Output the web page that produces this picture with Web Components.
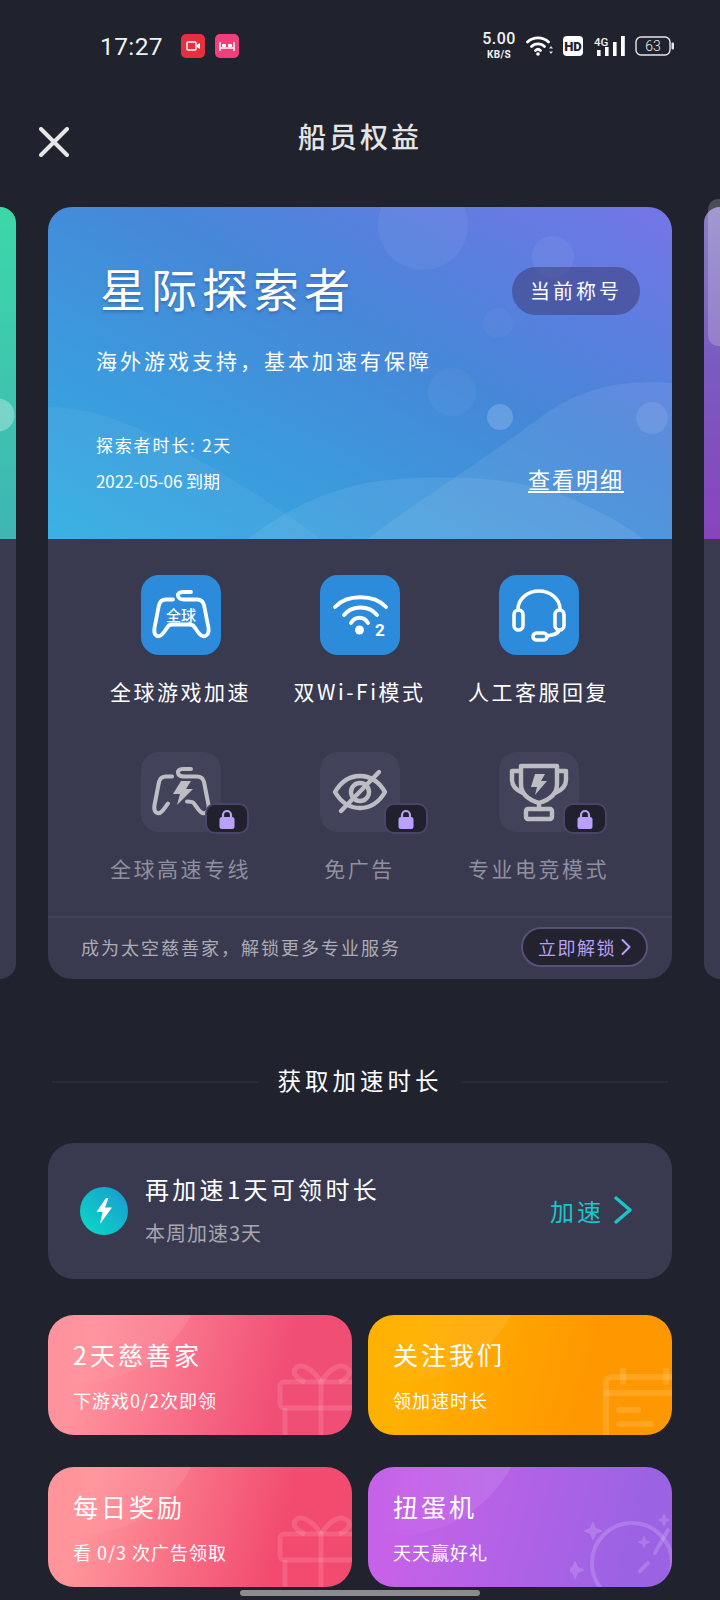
<!DOCTYPE html>
<html lang="zh">
<head>
<meta charset="utf-8">
<title>船员权益</title>
<style>
  html, body {
    margin: 0;
    background: #20222d;
  }
  body {
    font-family: "Noto Sans CJK SC", "Noto Sans", sans-serif;
    color: #fff;
  }
</style>
</head>
<body>

<template id="status-bar-tpl">
  <style>
    :host {
      display: flex;
      align-items: center;
      height: 92px;
      padding: 0 46px 0 100px;
      box-sizing: border-box;
      color: #f2f2f2;
      font-family: Roboto, sans-serif;
    }
    .time { font-size: 24.5px; width: 81px; letter-spacing: .4px; }
    .apps { display: flex; gap: 10px; }
    .right { margin-left: auto; display: flex; align-items: center; }
    .speed { width: 36px; text-align: center; margin-right: 9px; }
    .speed b { display: block; font-size: 16px; line-height: 16px; font-weight: 500; letter-spacing: .5px; }
    .speed i { display: block; font-size: 10px; line-height: 15px; font-weight: 700; font-style: normal; letter-spacing: .3px; }
    svg { display: block; }
    .bat { position: relative; width: 39px; height: 20px; margin-left: 10px; }
    .bat span { position: absolute; left: 0; right: 3px; top: 0; bottom: 0; text-align: center; font-size: 14px; line-height: 20px; font-weight: 300; }
  </style>
  <span class="time">17:27</span>
  <span class="apps">
    <svg width="24" height="24" viewBox="0 0 24 24"><rect width="24" height="24" rx="5" fill="#e5303f"/><rect x="6" y="8" width="9" height="8" rx="1" fill="none" stroke="#fff" stroke-width="1.4"/><path d="M15.5 11 L19 9 V15 L15.5 13" fill="#fff"/></svg>
    <svg width="24" height="24" viewBox="0 0 24 24"><rect width="24" height="24" rx="5" fill="#f23f7c"/><path d="M5 17 V8 M19 17 V8 M5 14 H19" stroke="#fff" stroke-width="1.5" fill="none"/><rect x="7" y="10" width="4" height="3" rx="1" fill="#fff"/><rect x="13" y="10" width="4" height="3" rx="1" fill="#fff"/></svg>
  </span>
  <span class="right">
    <span class="speed"><b>5.00</b><i>KB/S</i></span>
    <svg width="27" height="20" viewBox="0 0 27 20" fill="none" stroke="#fff" stroke-width="2.8" stroke-linecap="round"><path d="M1.5 6 C7 0.5 17 0.5 22.5 6"/><path d="M5.5 10.5 C9 7 15 7 18.5 10.5"/><path d="M9.5 14.5 C11 13 13 13 14.5 14.5"/><circle cx="12" cy="18" r="1.8" fill="#fff" stroke="none"/><path d="M25 10 l-2 2.6 h4 z M25 18 l-2 -2.6 h4 z" fill="#ddd" stroke="none"/></svg>
    <svg style="margin-left:10px" width="20" height="20" viewBox="0 0 20 20"><rect width="20" height="20" rx="4" fill="#fff"/><text x="10" y="15" text-anchor="middle" font-family="Roboto, sans-serif" font-size="13" font-weight="900" fill="#20222d">HD</text></svg>
    <svg style="margin-left:11px" width="31" height="20" viewBox="0 0 31 20"><text x="0" y="10" font-family="Roboto, sans-serif" font-size="11.5" font-weight="500" fill="#f2f2f2">4G</text><rect x="3" y="14" width="3.6" height="6" fill="#fff"/><rect x="11" y="11" width="3.6" height="9" fill="#fff"/><rect x="19" y="6" width="3.6" height="14" fill="#fff"/><rect x="27" y="0" width="3.8" height="20" fill="#fff"/></svg>
    <span class="bat">
      <svg width="39" height="20" viewBox="0 0 39 20"><rect x="1" y="1" width="34" height="18" rx="5" fill="none" stroke="#e8e8e8" stroke-width="1.4"/><rect x="36.5" y="6.5" width="2.5" height="7" rx="1" fill="#e8e8e8"/></svg>
      <span>63</span>
    </span>
  </span>
</template>

<template id="top-bar-tpl">
  <style>
    :host {
      display: flex;
      align-items: center;
      justify-content: center;
      position: relative;
      height: 92px;
      box-sizing: border-box;
      padding-bottom: 4px;
    }
    .close { position: absolute; left: 39px; top: 35px; }
    h1 {
      margin: 0;
      font-size: 28px;
      font-weight: 500;
      letter-spacing: 3px;
      color: #e4e4e4;
    }
  </style>
  <svg class="close" width="30" height="30" viewBox="0 0 30 30" fill="none" stroke="#e6e6e6" stroke-width="4" stroke-linecap="round"><path d="M2 2 L28 28 M28 2 L2 28"/></svg>
  <h1><slot></slot></h1>
</template>

<template id="tier-carousel-tpl">
  <style>
    :host {
      display: flex;
      gap: 32px;
      margin-top: 23px;
      width: 720px;
      height: 772px;
    }
  </style>
  <slot></slot>
</template>

<template id="peek-card-tpl">
  <style>
    :host {
      display: flex;
      flex-direction: column;
      position: relative;
      width: 16px;
      background: #393a4f;
    }
    .head { height: 332px; flex: none; }
    .bump {
      position: absolute;
      display: none;
      left: 4px;
      top: -8px;
      width: 16px;
      height: 147px;
      border-radius: 10px 0 0 10px;
      background: rgba(255, 255, 255, .2);
    }
    :host([side="left"]) { border-radius: 0 16px 16px 0; overflow: hidden; }
    :host([side="left"]) .head {
      background:
        radial-gradient(circle at -2px 208px, rgba(255,255,255,.3) 0 16px, transparent 17px),
        linear-gradient(180deg, #3cd8a8, #3fb5b4);
    }
    :host([side="right"]) { border-radius: 16px 0 0 16px; }
    :host([side="right"]) .head {
      border-radius: 16px 0 0 0;
      background: linear-gradient(180deg, #8a80c4 0, #7a5cc0 45%, #8844bc 100%);
    }
    :host([side="right"]) .bump { display: block; }
  </style>
  <div class="head"></div>
  <div class="bump"></div>
</template>

<template id="tier-card-tpl">
  <style>
    :host {
      display: block;
      width: 624px;
      flex: none;
      border-radius: 24px;
      overflow: hidden;
      background: #393a4f;
    }
    .head {
      position: relative;
      height: 332px;
      box-sizing: border-box;
      padding: 49px 32px 0 48px;
      background: linear-gradient(to top right, #31aee2 0%, #4687d8 58%, #7575e8 100%);
    }
    .deco { position: absolute; left: 0; top: 0; }
    .row { position: relative; display: flex; justify-content: space-between; align-items: flex-start; }
    h2 {
      margin: 0 0 0 4px;
      font-size: 46px;
      line-height: 62px;
      font-weight: 400;
      letter-spacing: 5px;
      text-shadow: 0 2px 3px rgba(30, 50, 110, .35);
    }
    .now {
      margin-top: 11px;
      width: 128px;
      height: 48px;
      border-radius: 24px;
      background: rgba(60, 60, 120, .55);
      text-align: center;
      font-size: 20px;
      line-height: 47px;
      letter-spacing: 3px;
    }
    .desc {
      position: relative;
      margin-top: 27px;
      font-size: 21px;
      line-height: 30px;
      letter-spacing: 3px;
    }
    .meta { position: relative; display: flex; justify-content: space-between; align-items: flex-end; margin-top: 52px; padding-right: 16px; }
    ::slotted(div) { font-size: 17px; line-height: 36px; }
    a {
      font-size: 22px;
      line-height: 26px;
      letter-spacing: 2px;
      margin-bottom: 6px;
      border-bottom: 2px solid #fff;
      color: #fff;
    }
    .perks {
      display: grid;
      grid-template-columns: repeat(3, 179px);
      row-gap: 50px;
      padding: 36px 0 37px 43px;
    }
    .foot {
      display: flex;
      align-items: center;
      justify-content: space-between;
      height: 63px;
      padding: 0 24px 4px 33px;
      border-top: 2px solid #41425a;
      box-sizing: border-box;
      color: #acacb4;
      font-size: 18px;
      letter-spacing: 2px;
    }
    .btn {
      display: flex;
      align-items: center;
      justify-content: center;
      gap: 5px;
      width: 127px;
      height: 40px;
      box-sizing: border-box;
      border: 2px solid #57507a;
      border-radius: 20px;
      background: #23232f;
      color: #b9a0f5;
      font-size: 18px;
      letter-spacing: 1.5px;
    }
  </style>
  <div class="head">
    <svg class="deco" width="624" height="332" viewBox="0 0 624 332" fill="#fff">
      <path d="M624 176 C570 172 530 182 490 212 C440 250 390 280 319 332 H624 Z" opacity=".08"/>
      <path d="M0 200 C40 200 80 215 120 236 C170 262 230 300 273 332 H0 Z" opacity=".05"/>
      <path d="M200 332 C240 300 290 276 350 272 C420 268 480 272 526 293 C560 308 580 320 595 332 Z" opacity=".08"/>
      <circle cx="375" cy="18" r="45" opacity=".05"/>
      <circle cx="505" cy="50" r="21" opacity=".06"/>
      <circle cx="450" cy="116" r="15" opacity=".03"/>
      <circle cx="404" cy="185" r="24" opacity=".04"/>
      <circle cx="452" cy="210" r="13" opacity=".18"/>
      <circle cx="604" cy="211" r="16" opacity=".1"/>
    </svg>
    <div class="row">
      <h2><slot name="title"></slot></h2>
      <div class="now"><slot name="badge"></slot></div>
    </div>
    <div class="desc"><slot name="desc"></slot></div>
    <div class="meta">
      <div><slot name="meta"></slot></div>
      <a><slot name="link"></slot></a>
    </div>
  </div>
  <div class="perks"><slot name="perks"></slot></div>
  <div class="foot">
    <span><slot name="foot"></slot></span>
    <span class="btn">
      <slot name="action"></slot>
      <svg width="10" height="18" viewBox="0 0 10 18" fill="none" stroke="#b9a0f5" stroke-width="2" stroke-linecap="round" stroke-linejoin="round"><path d="M1.5 2 L8.5 9 L1.5 16"/></svg>
    </span>
  </div>
</template>

<template id="perk-item-tpl">
  <style>
    :host {
      display: flex;
      flex-direction: column;
      align-items: center;
      gap: 25px;
    }
    .icon {
      position: relative;
      width: 80px;
      height: 80px;
      border-radius: 18px;
      background: #2c8cdb;
    }
    .label {
      font-size: 21px;
      line-height: 22px;
      letter-spacing: 2.5px;
      white-space: nowrap;
      color: #fff;
    }
    .lock {
      display: none;
      position: absolute;
      left: 64px;
      top: 51px;
      width: 44px;
      height: 31px;
      box-sizing: border-box;
      border: 2px solid #4a4568;
      border-radius: 10px;
      background: #20212c;
      align-items: center;
      justify-content: center;
    }
    :host([locked]) .icon { background: #42435a; }
    :host([locked]) .label { color: #8f909e; }
    :host([locked]) .lock { display: flex; }
  </style>
  <div class="icon">
    <slot></slot>
    <div class="lock">
      <svg width="16" height="20" viewBox="0 0 16 20"><path d="M4 9 V6 a4 4 0 0 1 8 0 V9" fill="none" stroke="#b9a0fb" stroke-width="2.2"/><rect x="0.5" y="8" width="15" height="12" rx="2.5" fill="#b9a0fb"/></svg>
    </div>
  </div>
  <div class="label"></div>
</template>

<template id="section-title-tpl">
  <style>
    :host {
      display: flex;
      align-items: center;
      gap: 20px;
      margin: 88px 52px 46px;
      height: 30px;
    }
    i { flex: 1; height: 2px; background: #2a2c38; }
    span { font-size: 23.5px; line-height: 26px; padding-bottom: 4px; letter-spacing: 4px; color: #fff; white-space: nowrap; }
  </style>
  <i></i><span><slot></slot></span><i></i>
</template>

<template id="speed-row-tpl">
  <style>
    :host {
      display: flex;
      align-items: center;
      height: 136px;
      margin: 0 48px;
      padding: 0 40px 0 32px;
      box-sizing: border-box;
      border-radius: 26px;
      background: #393a4f;
    }
    .dot {
      display: flex;
      align-items: center;
      justify-content: center;
      width: 48px;
      height: 48px;
      border-radius: 50%;
      background: linear-gradient(to top right, #08dcc4, #1b98d2);
      margin-right: 17px;
    }
    .text { flex: 1; }
    .title { font-size: 24px; line-height: 32px; letter-spacing: 3.3px; margin-top: -3px; }
    .sub { margin-top: 15px; font-size: 20px; line-height: 26px; letter-spacing: 1px; color: #a6a7ae; }
    .go { display: flex; align-items: center; gap: 10px; color: #1cc4cc; font-size: 24px; letter-spacing: 3px; margin-top: -2px; }
  </style>
  <span class="dot">
    <svg width="18" height="26" viewBox="0 0 18 26"><path d="M11 0 L1.5 14 H7.5 L5 26 L17 9.5 H10 L13.5 0 Z" fill="#fff"/></svg>
  </span>
  <div class="text">
    <div class="title"><slot name="title"></slot></div>
    <div class="sub"><slot name="sub"></slot></div>
  </div>
  <div class="go">
    <slot name="action"></slot>
    <svg width="18" height="28" viewBox="0 0 18 28" fill="none" stroke="#1cc4cc" stroke-width="3.4" stroke-linecap="round" stroke-linejoin="round"><path d="M2 2 L16 14 L2 26"/></svg>
  </div>
</template>

<template id="task-card-tpl">
  <style>
    :host {
      display: block;
      position: relative;
      height: 120px;
      box-sizing: border-box;
      padding: 23px 0 0 25px;
      border-radius: 26px;
      overflow: hidden;
      background: var(--bg);
    }
    .shine {
      position: absolute;
      left: -98px;
      top: -188px;
      width: 256px;
      height: 256px;
      border-radius: 50%;
      background: linear-gradient(to right, rgba(255, 255, 255, 0) 40%, rgba(255, 255, 255, .11) 100%);
    }
    .deco { position: absolute; right: 0; bottom: 0; line-height: 0; }
    .title { position: relative; font-size: 25px; line-height: 32px; letter-spacing: 3px; }
    .sub { position: relative; margin-top: 18px; font-size: 18px; line-height: 24px; letter-spacing: 1px; }
  </style>
  <div class="shine"></div>
  <div class="deco"><slot name="deco"></slot></div>
  <div class="title"><slot name="title"></slot></div>
  <div class="sub"><slot name="sub"></slot></div>
</template>

<template id="task-grid-tpl">
  <style>
    :host {
      display: grid;
      grid-template-columns: 304px 304px;
      gap: 32px 16px;
      margin: 36px 48px 0;
    }
  </style>
  <slot></slot>
</template>

<template id="app-page-tpl">
  <style>
    :host {
      display: block;
      position: relative;
      width: 720px;
      height: 1600px;
      overflow: hidden;
    }
    .home {
      position: absolute;
      left: 240px;
      top: 1590px;
      width: 240px;
      height: 6px;
      border-radius: 3px;
      background: #8a8c90;
    }
  </style>
  <slot></slot>
  <div class="home"></div>
</template>

<app-page>
  <status-bar></status-bar>
  <top-bar>船员权益</top-bar>

  <tier-carousel>
    <peek-card side="left"></peek-card>
    <tier-card>
      <span slot="title">星际探索者</span>
      <span slot="badge">当前称号</span>
      <span slot="desc">海外游戏支持，基本加速有保障</span>
      <div slot="meta" style="letter-spacing: 1.8px">探索者时长: 2天</div>
      <div slot="meta" style="letter-spacing: -.1px">2022-05-06 到期</div>
      <span slot="link">查看明细</span>

      <perk-item slot="perks" label="全球游戏加速">
        <svg width="80" height="80" viewBox="0 0 80 80" fill="none" stroke="#fff" stroke-width="3.8" stroke-linecap="round"><path d="M50 17 H42 C38 17 36.5 19 37 21 C37.5 23.5 40 24.5 43 24.5 H56 C60 24.5 62 26 63 30 L67.5 53 C68.5 59 65 62 61.5 61 C58 60 56 55 53 51.5 C52 50 50.5 49.5 48 49.5 H32 C29.5 49.5 28 50 27 51.5 C24 55 22 60 18.5 61 C15 62 12.5 59 13.5 53 L18 30 C19 26 21 24.5 25 24.5 H32"/><text x="40" y="46" text-anchor="middle" font-family="'Noto Sans CJK SC', sans-serif" font-size="15" font-weight="500" fill="#fff" stroke="none">全球</text></svg>
      </perk-item>
      <perk-item slot="perks" label="双Wi-Fi模式">
        <svg width="80" height="80" viewBox="0 0 80 80" fill="none" stroke="#fff" stroke-width="3.8" stroke-linecap="round"><path d="M15 32 C27 19 54 19 66 32"/><path d="M24 40 C32 30 49 30 57 40"/><path d="M31 48 C35 41 44 41 48 48"/><circle cx="39.5" cy="55" r="4.5" fill="#fff" stroke="none"/><text x="60" y="60.5" text-anchor="middle" font-family="Roboto, sans-serif" font-size="17" font-weight="700" fill="#fff" stroke="none">2</text></svg>
      </perk-item>
      <perk-item slot="perks" label="人工客服回复">
        <svg width="80" height="80" viewBox="0 0 80 80" fill="none" stroke="#fff" stroke-width="3.6" stroke-linecap="round"><path d="M19 35 V34 A21 18 0 0 1 61 34 V35"/><rect x="15" y="35" width="9" height="20" rx="4.5"/><rect x="56" y="35" width="9" height="20" rx="4.5"/><path d="M60 55 C59 59 55 60 48 61"/><rect x="34" y="58" width="14" height="7" rx="3.5"/></svg>
      </perk-item>

      <perk-item slot="perks" locked label="全球高速专线">
        <svg width="80" height="80" viewBox="0 0 80 80" fill="none" stroke="#bdbec4" stroke-width="4" stroke-linecap="round" stroke-linejoin="round"><path d="M50 17 H42 C38 17 36.5 19 37 21 C37.5 23.5 40 24.5 43 24.5 H56 C60 24.5 62 26 63 30 L67.5 53 C68.5 59 65 62 61.5 61 C58 60 56 55 53 51.5 C52 50 50.5 49.5 46 49.5"/><path d="M31 24.5 H25 C21 24.5 19 26 18 30 L13.5 53 C12.5 59 15 62 18.5 61 C22 60 24 55 27 51.5"/><path d="M40 29 H50 L45 37 H52 L36 53 L39 42 H32 Z" fill="#bdbec4" stroke="none"/></svg>
      </perk-item>
      <perk-item slot="perks" locked label="免广告">
        <svg width="80" height="80" viewBox="0 0 80 80" fill="none" stroke="#bdbec4" stroke-width="4.4" stroke-linecap="round" stroke-linejoin="round"><path d="M15 40 C22 28 31 24 40 24 C49 24 58 28 65 40 C58 52 49 56 40 56 C31 56 22 52 15 40 Z"/><circle cx="40" cy="40" r="9"/><path d="M21 59 L59 20"/></svg>
      </perk-item>
      <perk-item slot="perks" locked label="专业电竞模式">
        <svg width="80" height="80" viewBox="0 0 80 80" fill="none" stroke="#bdbec4" stroke-width="4.4" stroke-linecap="round" stroke-linejoin="round"><path d="M22 14 H58 V32 C58 42 50 48 40 51 C30 48 22 42 22 32 Z"/><path d="M22 19 H13 V28 C13 33 17 38 24 41"/><path d="M58 19 H67 V28 C67 33 63 38 56 41"/><path d="M40 51 V57"/><rect x="27" y="57" width="26" height="10" rx="2"/><path d="M36 22 H46 L42 29 H48 L36 43 L38 35 H32 Z" fill="#bdbec4" stroke="none"/></svg>
      </perk-item>

      <span slot="foot">成为太空慈善家，解锁更多专业服务</span>
      <span slot="action">立即解锁</span>
    </tier-card>
    <peek-card side="right"></peek-card>
  </tier-carousel>

  <section-title>获取加速时长</section-title>

  <speed-row>
    <span slot="title">再加速1天可领时长</span>
    <span slot="sub">本周加速3天</span>
    <span slot="action">加速</span>
  </speed-row>

  <task-grid>
    <task-card style="--bg: linear-gradient(105deg, #ff929c 15%, #f14e75 75%)">
      <span slot="title">2天慈善家</span>
      <span slot="sub">下游戏0/2次即领</span>
      <svg slot="deco" width="75" height="72" viewBox="0 0 75 72" fill="none" stroke="#fff" stroke-opacity=".12" stroke-width="5"><rect x="3" y="19" width="90" height="26" rx="4"/><path d="M8 45 V72 M44 19 V72"/><path d="M44 19 C36 6 26 1 20 4 C14 8 18 15 28 19"/><path d="M44 19 C52 6 62 1 68 4 C76 8 72 15 62 19"/></svg>
    </task-card>
    <task-card style="--bg: linear-gradient(105deg, #ffb100 15%, #ff9800 70%)">
      <span slot="title">关注我们</span>
      <span slot="sub">领加速时长</span>
      <svg slot="deco" width="69" height="67" viewBox="0 0 69 67" fill="none" stroke="#fff" stroke-opacity=".13" stroke-width="6" stroke-linecap="round"><rect x="3" y="9" width="90" height="80" rx="6"/><path d="M3 25 H69 M20 2 V14 M63 2 V14"/><path d="M16 42 H35 M16 56 H48"/></svg>
    </task-card>
    <task-card style="--bg: linear-gradient(105deg, #ff949a 15%, #f24b6f 75%)">
      <span slot="title">每日奖励</span>
      <span slot="sub">看 0/3 次广告领取</span>
      <svg slot="deco" width="75" height="72" viewBox="0 0 75 72" fill="none" stroke="#fff" stroke-opacity=".12" stroke-width="5"><rect x="3" y="19" width="90" height="26" rx="4"/><path d="M8 45 V72 M44 19 V72"/><path d="M44 19 C36 6 26 1 20 4 C14 8 18 15 28 19"/><path d="M44 19 C52 6 62 1 68 4 C76 8 72 15 62 19"/></svg>
    </task-card>
    <task-card style="--bg: linear-gradient(105deg, #c562e8 15%, #9c62e4 85%)">
      <span slot="title">扭蛋机</span>
      <span slot="sub">天天赢好礼</span>
      <svg slot="deco" width="102" height="74" viewBox="0 0 102 74" fill="none" stroke="#fff" stroke-opacity=".16" stroke-width="4"><circle cx="62" cy="50" r="40"/><path d="M98 17 L85 40 M78 50 L70 58" stroke-linecap="round"/><path d="M23 8 l3 7 7 3 -7 3 -3 7 -3 -7 -7 -3 7 -3 Z M5 47 l3 7 7 3 -7 3 -3 7 -3 -7 -7 -3 7 -3 Z M74 22 l2 5 5 2 -5 2 -2 5 -2 -5 -5 -2 5 -2 Z M94 0 l2 5 5 2 -5 2 -2 5 -2 -5 -5 -2 5 -2 Z" fill="#fff" fill-opacity=".16" stroke="none"/></svg>
    </task-card>
  </task-grid>
</app-page>

<script>
  class BaseElement extends HTMLElement {
    constructor(tplId) {
      super();
      let template = document.querySelector(tplId);
      let clone = document.importNode(template.content, true);
      let shadow = this.attachShadow({ mode: 'open' });
      shadow.appendChild(clone);
    }
  }

  class PerkItem extends BaseElement {
    constructor() {
      super('#perk-item-tpl');
    }

    connectedCallback() {
      this.shadowRoot.querySelector('.label').textContent = this.getAttribute('label') || '';
    }
  }

  window.customElements.define('perk-item', PerkItem);

  let simple = {
    'status-bar': '#status-bar-tpl',
    'top-bar': '#top-bar-tpl',
    'tier-carousel': '#tier-carousel-tpl',
    'peek-card': '#peek-card-tpl',
    'tier-card': '#tier-card-tpl',
    'section-title': '#section-title-tpl',
    'speed-row': '#speed-row-tpl',
    'task-card': '#task-card-tpl',
    'task-grid': '#task-grid-tpl',
    'app-page': '#app-page-tpl'
  };

  Object.keys(simple).forEach((name) => {
    window.customElements.define(name, class extends BaseElement {
      constructor() {
        super(simple[name]);
      }
    });
  });
</script>
</body>
</html>
